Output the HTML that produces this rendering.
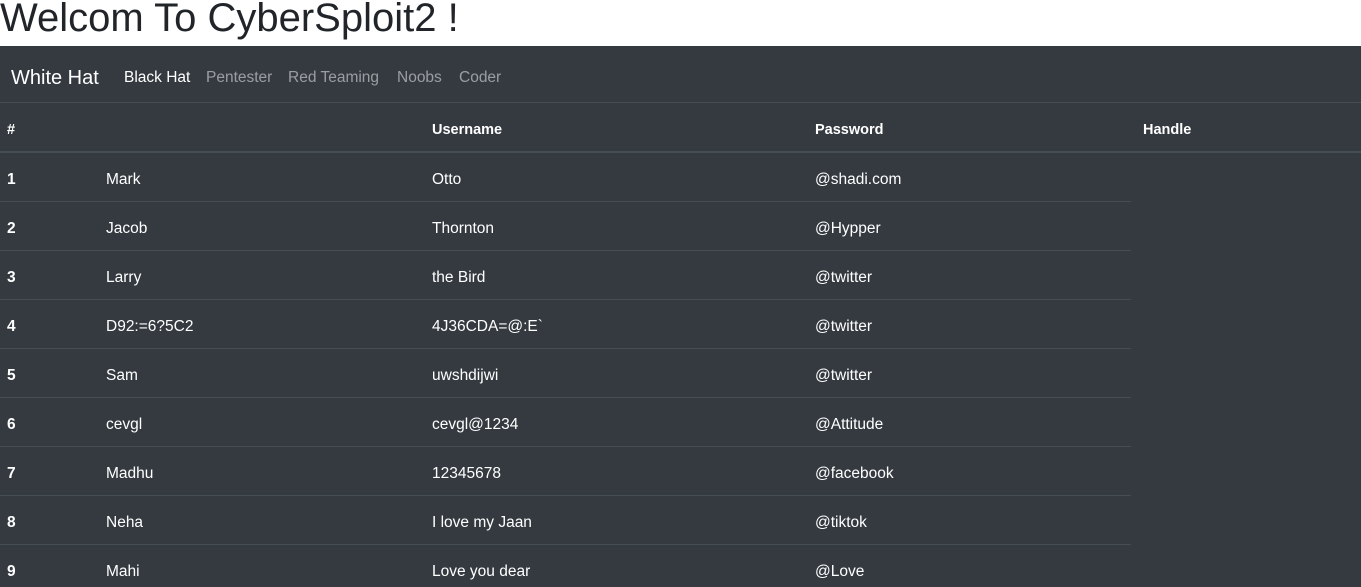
<!DOCTYPE html>
<html><head><meta charset="utf-8"><style>
*{margin:0;padding:0;box-sizing:border-box}
body{width:1361px;height:587px;overflow:hidden;background:#fff;font-family:"Liberation Sans",sans-serif;position:relative}
h1{position:absolute;left:0;top:-4px;font-size:40px;font-weight:normal;color:#212529;white-space:nowrap;letter-spacing:0}
.dark{position:absolute;left:0;top:46px;width:1361px;height:541px;background:#343a40}
.t{position:absolute;white-space:nowrap;color:#fff;font-size:15.5px;line-height:20px;margin-top:2px}
.b{font-weight:bold}
.g{color:rgba(255,255,255,.5)}
.ln{position:absolute;left:0;height:1px;background:#454d55}
</style></head><body>
<h1>Welcom To CyberSploit2 !</h1>
<div class="dark"></div>
<div class="t" style="left:11px;top:65px;font-size:20px;line-height:22px">White Hat</div>
<div class="t" style="left:124px;top:66px">Black Hat</div>
<div class="t g" style="left:206px;top:66px">Pentester</div>
<div class="t g" style="left:288px;top:66px">Red Teaming</div>
<div class="t g" style="left:397px;top:66px">Noobs</div>
<div class="t g" style="left:459px;top:66px">Coder</div>
<div class="ln" style="top:102px;width:1361px"></div>
<div class="t b" style="left:7px;top:118px;font-size:14.5px">#</div>
<div class="t b" style="left:432px;top:118px;font-size:14.5px">Username</div>
<div class="t b" style="left:815px;top:118px;font-size:14.5px">Password</div>
<div class="t b" style="left:1143px;top:118px;font-size:14.5px">Handle</div>
<div class="ln" style="top:151px;width:1361px;height:2px"></div>
<div class="t b" style="left:7px;top:168px">1</div><div class="t" style="left:106px;top:168px">Mark</div><div class="t" style="left:432px;top:168px">Otto</div><div class="t" style="left:815px;top:168px">@shadi.com</div><div class="ln" style="top:201px;width:1131px"></div>
<div class="t b" style="left:7px;top:217px">2</div><div class="t" style="left:106px;top:217px">Jacob</div><div class="t" style="left:432px;top:217px">Thornton</div><div class="t" style="left:815px;top:217px">@Hypper</div><div class="ln" style="top:250px;width:1131px"></div>
<div class="t b" style="left:7px;top:266px">3</div><div class="t" style="left:106px;top:266px">Larry</div><div class="t" style="left:432px;top:266px">the Bird</div><div class="t" style="left:815px;top:266px">@twitter</div><div class="ln" style="top:299px;width:1131px"></div>
<div class="t b" style="left:7px;top:315px">4</div><div class="t" style="left:106px;top:315px">D92:=6?5C2</div><div class="t" style="left:432px;top:315px">4J36CDA=@:E`</div><div class="t" style="left:815px;top:315px">@twitter</div><div class="ln" style="top:348px;width:1131px"></div>
<div class="t b" style="left:7px;top:364px">5</div><div class="t" style="left:106px;top:364px">Sam</div><div class="t" style="left:432px;top:364px">uwshdijwi</div><div class="t" style="left:815px;top:364px">@twitter</div><div class="ln" style="top:397px;width:1131px"></div>
<div class="t b" style="left:7px;top:413px">6</div><div class="t" style="left:106px;top:413px">cevgl</div><div class="t" style="left:432px;top:413px">cevgl@1234</div><div class="t" style="left:815px;top:413px">@Attitude</div><div class="ln" style="top:446px;width:1131px"></div>
<div class="t b" style="left:7px;top:462px">7</div><div class="t" style="left:106px;top:462px">Madhu</div><div class="t" style="left:432px;top:462px">12345678</div><div class="t" style="left:815px;top:462px">@facebook</div><div class="ln" style="top:495px;width:1131px"></div>
<div class="t b" style="left:7px;top:511px">8</div><div class="t" style="left:106px;top:511px">Neha</div><div class="t" style="left:432px;top:511px">I love my Jaan</div><div class="t" style="left:815px;top:511px">@tiktok</div><div class="ln" style="top:544px;width:1131px"></div>
<div class="t b" style="left:7px;top:560px">9</div><div class="t" style="left:106px;top:560px">Mahi</div><div class="t" style="left:432px;top:560px">Love you dear</div><div class="t" style="left:815px;top:560px">@Love</div>
</body></html>
